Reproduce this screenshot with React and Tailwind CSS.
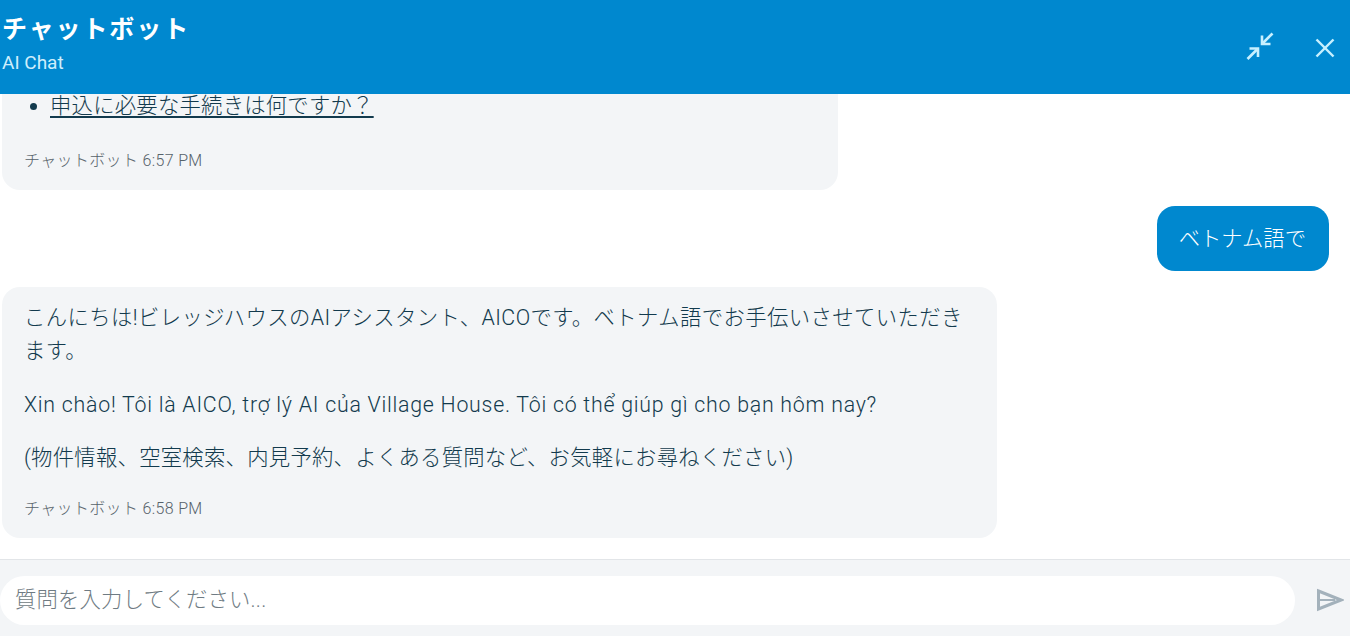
import React from "react";

function Meta({ children, className }) {
  return <div className={"text-[16px] leading-[20px] text-[#56626a] tracking-[0.35px] font-light " + className}>{children}</div>;
}

export default function App() {
  return (
    <div className="font-['Roboto','Noto_Sans_CJK_JP',sans-serif] w-[1350px] h-[636px] flex flex-col overflow-hidden bg-white text-[#123a4d]">
      <header className="h-[94px] shrink-0 bg-[#0088cf] flex items-center justify-between">
        <div className="pl-[2px] -mt-[6px]">
          <div className="text-[25px] leading-[32px] font-bold tracking-[1.9px] text-white">チャットボット</div>
          <div className="text-[19px] leading-[24px] text-[#cfeefc] mt-[5px]">AI Chat</div>
        </div>
        <div className="flex items-center gap-[37px] pr-[13px] pt-[1px] text-[#c8f0ff]">
          <svg width="30" height="30" viewBox="0 0 30 30" fill="none" stroke="currentColor" strokeWidth="2.6" className="mb-[3px] mr-[1px]">
            <path d="M2.5 28 L12.5 18" />
            <path d="M4.5 17.5 H13 V26" />
            <path d="M27.5 2.5 L17.5 12.5" />
            <path d="M17 4.5 V13 H25.5" />
          </svg>
          <svg width="24" height="24" viewBox="0 0 24 24" fill="none" stroke="currentColor" strokeWidth="2.4">
            <path d="M3.5 3.5 L20.5 20.5" />
            <path d="M20.5 3.5 L3.5 20.5" />
          </svg>
        </div>
      </header>

      <main className="flex-1 min-h-0 overflow-hidden flex flex-col justify-end pl-[2px] pr-[21px] pb-[21px] gap-[16px]">
        <div className="shrink-0 w-[836px] rounded-[18px] bg-[#f3f5f7] pl-[22px] pr-[23px] pt-[60px] pb-[19px] font-light">
          <ul className="list-disc pl-[26px] text-[21.33px] leading-[33px]">
            <li><a className="underline underline-offset-[3px] tracking-[0.25px]">申込に必要な手続きは何ですか？</a></li>
          </ul>
          <Meta className="mt-[29px]">チャットボット 6:57 PM</Meta>
        </div>

        <div className="shrink-0 self-end rounded-[18px] bg-[#0088cf] text-white text-[21.33px] leading-[33px] pl-[22px] pr-[23px] py-[16px] font-light">ベトナム語で</div>

        <div className="shrink-0 w-[995px] rounded-[18px] bg-[#f3f5f7] pl-[22px] pr-[23px] pt-[14px] pb-[19px] text-[21.33px] leading-[33px] font-light">
          <p className="tracking-[0.42px] pr-[10px]">こんにちは!ビレッジハウスのAIアシスタント、AICOです。ベトナム語でお手伝いさせていただきます。</p>
          <p className="mt-[21px] tracking-[0.75px]">Xin chào! Tôi là AICO, trợ lý AI của Village House. Tôi có thể giúp gì cho bạn hôm nay?</p>
          <p className="mt-[20px] tracking-[0.28px]">(物件情報、空室検索、内見予約、よくある質問など、お気軽にお尋ねください)</p>
          <Meta className="mt-[25px]">チャットボット 6:58 PM</Meta>
        </div>
      </main>

      <footer className="h-[77px] shrink-0 border-t border-[#e2e5e8] bg-[#f3f5f7] flex items-center gap-[21px] pr-[6px] pt-[4px]">
        <div className="flex-1 h-[49px] rounded-full bg-white flex items-center pl-[15px] text-[21.33px] tracking-[0.2px] text-[#6f7b83] font-light">質問を入力してください...</div>
        <svg width="28" height="24" viewBox="0 0 28 24" fill="none" stroke="#a3b1bb" strokeWidth="3">
          <path d="M2.5 3 L25 12 L2.5 21 Z" />
          <path d="M3 12 H19" strokeWidth="2" />
        </svg>
      </footer>
    </div>
  );
}
